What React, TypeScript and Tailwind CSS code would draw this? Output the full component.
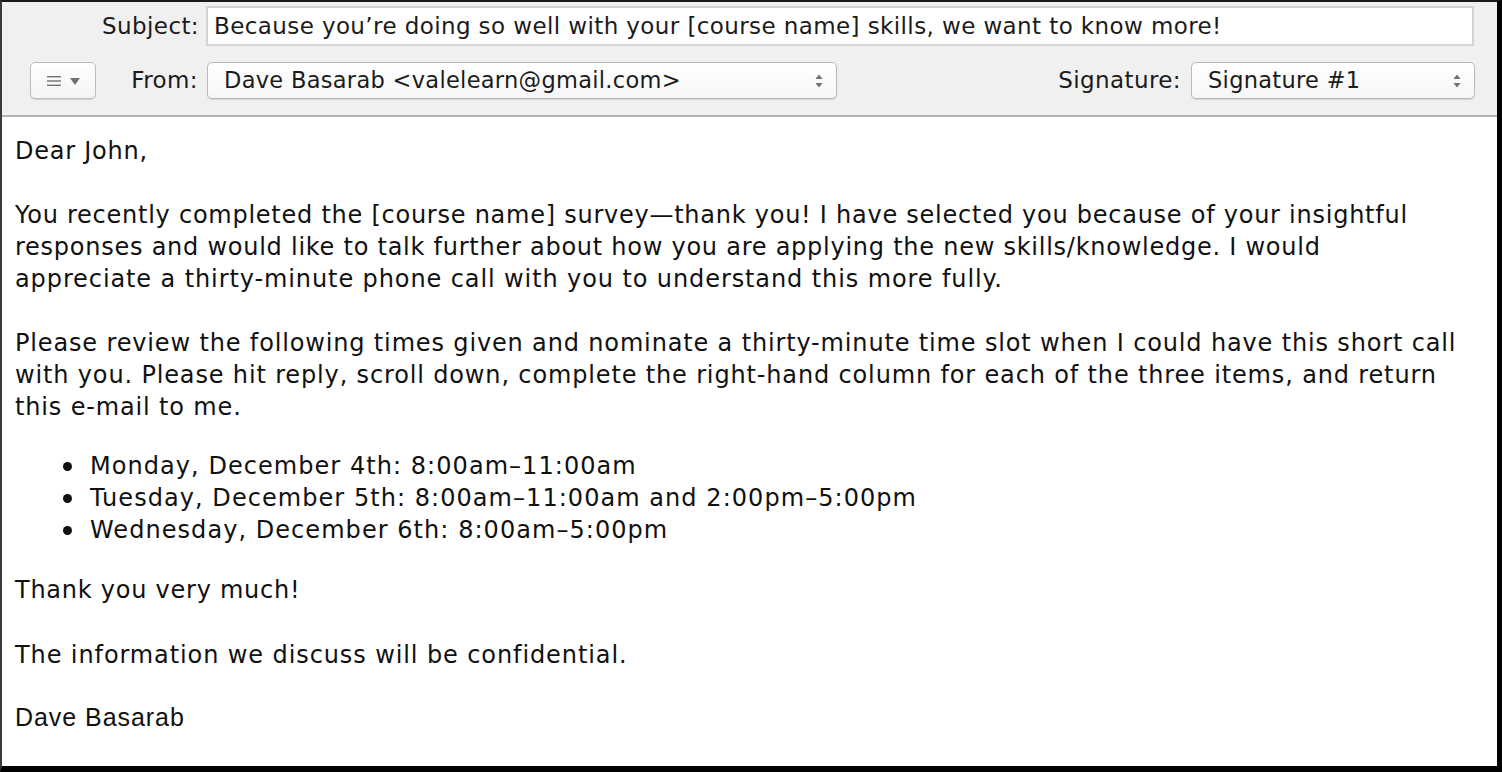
import React from "react";

const lucida = { fontFamily: '"DejaVu Sans", "Noto Sans", sans-serif' };

function Arrows() {
  return (
    <svg width="10" height="18" viewBox="0 0 10 18" className="shrink-0">
      <path d="M5 2.5 L8.5 7 L1.5 7 Z" fill="#707070" />
      <path d="M5 15.5 L8.5 11 L1.5 11 Z" fill="#707070" />
    </svg>
  );
}

function Select({ text, className }: { text: string; className: string }) {
  return (
    <div
      className={
        "flex items-center justify-between rounded-[5px] border border-[#b9b9b9] bg-gradient-to-b from-white to-[#f6f6f6] pl-[16px] pr-[12px] shadow-[0_1px_1px_rgba(0,0,0,0.12)] " +
        className
      }
    >
      <span className="text-[22.5px] tracking-[0.3px] text-[#1b1b1b]">{text}</span>
      <Arrows />
    </div>
  );
}

export default function App() {
  return (
    <div
      className="flex h-[772px] w-[1502px] flex-col overflow-hidden border-t-2 border-l-2 border-r-[5px] border-b-[6px] border-t-[#1a1a1a] border-l-[#3a3a3a] border-r-black border-b-black bg-white"
      style={lucida}
    >
      <div className="flex h-[115px] shrink-0 flex-col border-b-2 border-[#b4b4b4] bg-[#f0f0f0]">
        <div className="mt-[4px] flex h-[40px] items-center">
          <div className="w-[197px] text-right text-[23px] tracking-[0.4px] text-[#1b1b1b]">Subject:</div>
          <div className="ml-[7px] flex h-[40px] w-[1268px] items-center border-2 border-[#d2d2d2] bg-white pl-[6px] text-[23px] tracking-[0.4px] text-[#1b1b1b]">
            Because you’re doing so well with your [course name] skills, we want to know more!
          </div>
        </div>
        <div className="mt-[16px] flex h-[37px] items-center">
          <div className="ml-[28px] flex h-[37px] w-[66px] shrink-0 items-center justify-center gap-[9px] rounded-[5px] border border-[#bcbcbc] bg-gradient-to-b from-white to-[#f4f4f4] shadow-[0_1px_1px_rgba(0,0,0,0.12)]">
            <svg width="14" height="12" viewBox="0 0 14 12">
              <rect x="0" y="1" width="14" height="1.4" fill="#707070" />
              <rect x="0" y="5.3" width="14" height="1.4" fill="#707070" />
              <rect x="0" y="9.6" width="14" height="1.4" fill="#707070" />
            </svg>
            <svg width="10" height="8" viewBox="0 0 10 8">
              <path d="M0 1 L10 1 L5 8 Z" fill="#707070" />
            </svg>
          </div>
          <div className="w-[102px] shrink-0 text-right text-[23px] tracking-[0.4px] text-[#1b1b1b]">From:</div>
          <Select text="Dave Basarab <valelearn@gmail.com>" className="ml-[9px] h-[37px] w-[630px] shrink-0" />
          <div className="ml-auto text-[23px] tracking-[0.4px] text-[#1b1b1b]">Signature:</div>
          <Select text="Signature #1" className="ml-[10px] mr-[22px] h-[37px] w-[284px] shrink-0" />
        </div>
      </div>
      <div className="flex flex-col pl-[13px] pt-[18px] text-[24px] leading-[32px] tracking-[0.75px] text-[#111]">
        <p>Dear John,</p>
        <p className="mt-[32px] whitespace-nowrap">
          You recently completed the [course name] survey—thank you! I have selected you because of your insightful
          <br />
          responses and would like to talk further about how you are applying the new skills/knowledge. I would
          <br />
          <span className="tracking-[0.9px]">appreciate a thirty-minute phone call with you to understand this more fully.</span>
        </p>
        <p className="mt-[32px] whitespace-nowrap tracking-[0.85px]">
          Please review the following times given and nominate a thirty-minute time slot when I could have this short call
          <br />
          with you. Please hit reply, scroll down, complete the right-hand column for each of the three items, and return
          <br />
          this e-mail to me.
        </p>
        <ul className="mt-[27px] flex flex-col tracking-[1.05px]">
          {[
            "Monday, December 4th: 8:00am–11:00am",
            "Tuesday, December 5th: 8:00am–11:00am and 2:00pm–5:00pm",
            "Wednesday, December 6th: 8:00am–5:00pm",
          ].map((t) => (
            <li key={t} className="flex items-center">
              <span className="ml-[48px] mr-[18px] h-[9px] w-[9px] rounded-full bg-[#111]" />
              <span>{t}</span>
            </li>
          ))}
        </ul>
        <p className="mt-[28px]">Thank you very much!</p>
        <p className="mt-[33px] tracking-[0.9px]">The information we discuss will be confidential.</p>
        <p
          className="mt-[30px] text-[25px] tracking-[0.95px]"
          style={{ fontFamily: '"Liberation Sans", Arial, sans-serif' }}
        >
          Dave Basarab
        </p>
      </div>
    </div>
  );
}
